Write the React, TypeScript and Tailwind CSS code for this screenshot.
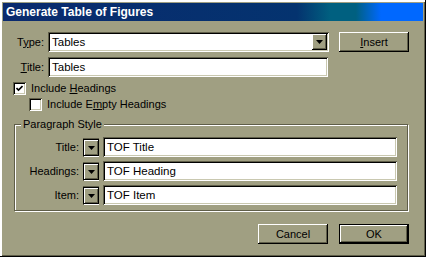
import type { ReactNode } from "react";

const fontClass = "font-['Liberation_Sans',Arial,sans-serif]";
const raisedClass =
  "shadow-[inset_-1px_-1px_0_#000,inset_1px_1px_0_#fff,inset_-2px_-2px_0_#5f5e49]";
const sunkenClass =
  "bg-white shadow-[inset_1px_1px_0_#5f5e49,inset_-1px_-1px_0_#fff,inset_2px_2px_0_#000,inset_-2px_-2px_0_#c9c8b0]";

function Arrow() {
  return (
    <svg width="7" height="4" viewBox="0 0 7 4" aria-hidden="true">
      <polygon points="0,0 7,0 3.5,4" fill="#000" />
    </svg>
  );
}

function DropButton() {
  return (
    <div
      className={`flex h-[16px] w-[15px] items-center justify-center bg-[#a09f82] ${raisedClass}`}
    >
      <Arrow />
    </div>
  );
}

function TextField({ value, width }: { value: string; width: string }) {
  return (
    <div
      className={`flex h-[20px] items-center pl-[4px] text-[11.5px] text-black ${sunkenClass} ${width}`}
    >
      {value}
    </div>
  );
}

function Button({
  children,
  isDefault,
  width,
}: {
  children: ReactNode;
  isDefault?: boolean;
  width: string;
}) {
  return (
    <div className={`h-[20px] ${width} ${isDefault ? "border border-black" : ""}`}>
      <div
        className={`flex h-full w-full items-center justify-center bg-[#a09f82] ${raisedClass}`}
      >
        {children}
      </div>
    </div>
  );
}

function Checkbox({ checked }: { checked?: boolean }) {
  return (
    <div className={`flex h-[13px] w-[13px] items-center justify-center ${sunkenClass}`}>
      {checked && (
        <svg width="7" height="7" viewBox="0 0 7 7" aria-hidden="true">
          <polyline
            points="0.5,3 2.5,5 6.5,1"
            fill="none"
            stroke="#000"
            strokeWidth="1.6"
          />
        </svg>
      )}
    </div>
  );
}

function StyleRow({ label, value }: { label: string; value: string }) {
  return (
    <div className="flex h-[20px] items-center">
      <span className="w-[64px] text-right">{label}</span>
      <div className="ml-[4px] flex h-[19px] w-[16px] items-center justify-center shadow-[inset_1px_1px_0_#5f5e49,inset_-1px_-1px_0_#fff]">
        <div className="border-t border-l border-black">
          <DropButton />
        </div>
      </div>
      <div className="ml-[4px]">
        <TextField value={value} width="w-[294px]" />
      </div>
    </div>
  );
}

export default function App() {
  return (
    <div
      className={`flex h-[257px] w-[426px] flex-col bg-[#a09f82] p-[3px] text-[11px] leading-[13px] text-black ${fontClass} shadow-[inset_-1px_-1px_0_#000,inset_2px_2px_0_#fff,inset_-2px_-2px_0_#5f5e49]`}
    >
      <div className="flex h-[18px] items-center bg-[linear-gradient(to_right,#0a2a6e_0%,#04336f_70%,#006080_78%,#006080_84%,#0068ff_90%,#0068ff_100%)] pl-[3px] text-[12px] font-bold text-white">
        Generate Table of Figures
      </div>

      <div className="mt-[11px] flex h-[20px] items-center">
        <span className="w-[41px] text-right">
          T<span className="underline">y</span>pe:
        </span>
        <div
          className={`ml-[4px] flex h-[20px] w-[281px] items-center justify-between pr-[2px] pl-[4px] text-[11.5px] ${sunkenClass}`}
        >
          <span>Tables</span>
          <DropButton />
        </div>
        <div className="ml-[10px]">
          <Button width="w-[70px]">
            <span>
              <span className="underline">I</span>nsert
            </span>
          </Button>
        </div>
      </div>

      <div className="mt-[5px] flex h-[20px] items-center">
        <span className="w-[41px] text-right">
          <span className="underline">T</span>itle:
        </span>
        <div className="ml-[4px]">
          <TextField value="Tables" width="w-[280px]" />
        </div>
      </div>

      <div className="mt-[5px] flex h-[13px] items-center pl-[10px]">
        <Checkbox checked />
        <span className="ml-[5px]">
          Include <span className="underline">H</span>eadings
        </span>
      </div>

      <div className="mt-[3px] flex h-[13px] items-center pl-[26px]">
        <Checkbox />
        <span className="ml-[5px]">
          Include E<span className="underline">m</span>pty Headings
        </span>
      </div>

      <div className="relative mt-[13px] ml-[11px] flex h-[87px] w-[394px] flex-col gap-[4px] border border-[#5f5e49] pt-[12px] shadow-[1px_1px_0_#fff,inset_1px_1px_0_#fff]">
        <span className="absolute -top-[7px] left-[6px] bg-[#a09f82] px-[2px]">
          Paragraph Style
        </span>
        <StyleRow label="Title:" value="TOF Title" />
        <StyleRow label="Headings:" value="TOF Heading" />
        <StyleRow label="Item:" value="TOF Item" />
      </div>

      <div className="mt-[13px] flex justify-end gap-[11px] pr-[14px]">
        <Button width="w-[70px]">Cancel</Button>
        <Button width="w-[70px]" isDefault>
          OK
        </Button>
      </div>
    </div>
  );
}
